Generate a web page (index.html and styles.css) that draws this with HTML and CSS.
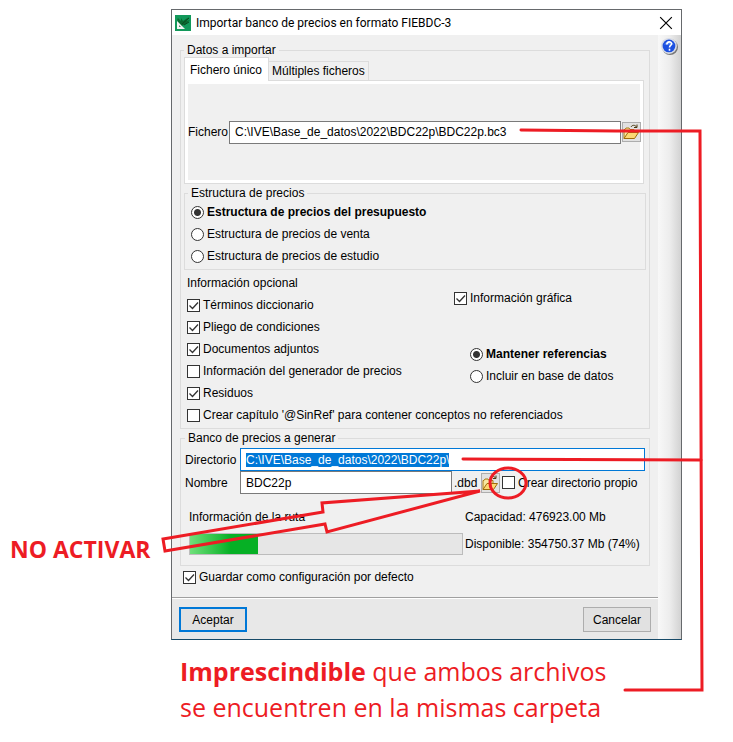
FILE: index.html
```html
<!DOCTYPE html>
<html lang="es">
<head>
    <meta charset="UTF-8">
    <meta name="viewport" content="width=device-width, initial-scale=1.0">
    <title>Importar banco de precios en formato FIEBDC-3</title>
    <link rel="stylesheet" href="styles.css">
</head>
<body>
    <svg class="icon-defs" aria-hidden="true">
        <symbol id="icon-folder" viewBox="0 0 16 16">
            <path d="M1 14.500V5.500h1l1-1.500h3l1 1.500h4v3" fill="#f8e8a0" stroke="#a87814"/>
            <path d="M1 14.500l4-6h10.500l-4 6z" fill="#fbd873" stroke="#a06c08"/>
            <path d="M8 3c1-2 4-2.500 5.500 0M14 .5v3h-3" fill="none" stroke="#4a3a10"/>
        </symbol>
    </svg>

    <div class="page">
        <strong class="side-note">NO ACTIVAR</strong>

        <div class="dialog" role="dialog" aria-labelledby="dialog-title">
            <header class="title-bar">
                <svg class="app-icon" viewBox="0 0 16 16" aria-hidden="true">
                    <rect width="16" height="16" fill="#12985a"/>
                    <path d="M5 9C2 6 2 4 3 3l3 3V3l2 3 6-4-3 4 4-1-4 4-5 2z" fill="#0b6a30"/>
                    <path d="M7 9l7-6M9 10l5-3" stroke="#0a4a20" fill="none"/>
                    <path d="M2 6v8h8z" fill="#f4f4f4"/>
                    <path d="M4 10v2h2z" fill="#4c8a68"/>
                </svg>
                <h1 id="dialog-title">Importar banco de precios en formato FIEBDC-3</h1>
                <button class="close-btn" type="button" aria-label="Cerrar">
                    <svg viewBox="0 0 12 12" aria-hidden="true"><path d="M1 1l10 10M11 1L1 11" stroke="#000" fill="none"/></svg>
                </button>
            </header>

            <div class="dialog-body">
                <form class="main-form">
                    <div class="form-content">
                        <fieldset class="group import-group">
                            <legend>Datos a importar</legend>
                            <div class="tabs" role="tablist">
                                <button class="tab active" type="button" role="tab" aria-selected="true">Fichero único</button>
                                <button class="tab" type="button" role="tab" aria-selected="false">Múltiples ficheros</button>
                            </div>
                            <div class="tab-panel" role="tabpanel">
                                <label for="fichero">Fichero</label>
                                <input class="text-box" type="text" id="fichero" value="C:\IVE\Base_de_datos\2022\BDC22p\BDC22p.bc3">
                                <button class="browse-btn" type="button" aria-label="Examinar fichero"><svg><use href="#icon-folder"/></svg></button>
                            </div>

                            <fieldset class="group price-group">
                                <legend>Estructura de precios</legend>
                                <label class="option"><input type="radio" name="estructura" checked><span>Estructura de precios del presupuesto</span></label>
                                <label class="option"><input type="radio" name="estructura"><span>Estructura de precios de venta</span></label>
                                <label class="option"><input type="radio" name="estructura"><span>Estructura de precios de estudio</span></label>
                            </fieldset>

                            <div class="optional">
                                <div class="optional-left">
                                    <h2>Información opcional</h2>
                                    <label class="option"><input type="checkbox" checked><span>Términos diccionario</span></label>
                                    <label class="option"><input type="checkbox" checked><span>Pliego de condiciones</span></label>
                                    <label class="option"><input type="checkbox" checked><span>Documentos adjuntos</span></label>
                                    <label class="option"><input type="checkbox"><span>Información del generador de precios</span></label>
                                    <label class="option"><input type="checkbox" checked><span>Residuos</span></label>
                                    <label class="option"><input type="checkbox"><span>Crear capítulo '@SinRef' para contener conceptos no referenciados</span></label>
                                </div>
                                <div class="optional-right">
                                    <label class="option"><input type="checkbox" checked><span>Información gráfica</span></label>
                                    <div class="references">
                                        <label class="option"><input type="radio" name="referencias" checked><span>Mantener referencias</span></label>
                                        <label class="option"><input type="radio" name="referencias"><span>Incluir en base de datos</span></label>
                                    </div>
                                </div>
                            </div>
                        </fieldset>

                        <fieldset class="group target-group">
                            <legend>Banco de precios a generar</legend>
                            <div class="target-row">
                                <label for="directorio">Directorio</label>
                                <input class="text-box focused" type="text" id="directorio" value="C:\IVE\Base_de_datos\2022\BDC22p\">
                            </div>
                            <div class="target-row">
                                <label for="nombre">Nombre</label>
                                <input class="text-box name-box" type="text" id="nombre" value="BDC22p">
                                <span class="extension">.dbd</span>
                                <button class="browse-btn" type="button" aria-label="Examinar directorio"><svg><use href="#icon-folder"/></svg></button>
                                <label class="option"><input type="checkbox"><span>Crear directorio propio</span></label>
                            </div>
                            <div class="disk">
                                <label for="disco">Información de la ruta</label>
                                <span>Capacidad: 476923.00 Mb</span>
                                <progress id="disco" max="100" value="25"></progress>
                                <span>Disponible: 354750.37 Mb (74%)</span>
                            </div>
                        </fieldset>

                        <label class="option save-option"><input type="checkbox" checked><span>Guardar como configuración por defecto</span></label>
                    </div>

                    <footer class="actions">
                        <button class="btn default" type="button">Aceptar</button>
                        <button class="btn" type="button">Cancelar</button>
                    </footer>
                </form>

                <aside class="help-strip">
                    <button class="help-btn" type="button" aria-label="Ayuda">
                        <svg viewBox="0 0 16 16" aria-hidden="true">
                            <circle cx="8.500" cy="8.500" r="7.500" fill="#777"/>
                            <circle cx="7.500" cy="7.500" r="7.500" fill="#d8dce6"/>
                            <circle cx="7.500" cy="7.500" r="6" fill="#1c50e0"/>
                            <path d="M3 6a5 4 0 0 1 9 0z" fill="#5c8cf4"/>
                            <path d="M5.500 6c0-3 4.500-3 4.500-.5 0 1.500-2 1.500-2 3.500M8 10v2" stroke="#fff" stroke-width="1.500" fill="none"/>
                        </svg>
                    </button>
                </aside>
            </div>
        </div>

        <p class="caption"><strong>Imprescindible</strong> que ambos archivos<br>se encuentren en la mismas carpeta</p>

        <!-- Marcas rojas sobre el diálogo -->
        <svg class="marks" viewBox="0 0 733 742" aria-hidden="true">
            <path d="M521 130L616 131L700 131L701 430L702 690H625"/>
            <path d="M463 459L701 460"/>
            <ellipse cx="508" cy="483" rx="18" ry="15"/>
            <path d="M480 491L322 503L323 512L163 539L165 551L325 524L327 532Z"/>
        </svg>
    </div>

    <script src="script.js"></script>
</body>
</html>
```
FILE: styles.css
```css
* { box-sizing: border-box; }
body { margin: 0; background-color: #fff; color: #000; font-family: "Liberation Sans", Arial, sans-serif; font-size: 12px; line-height: 14px; }
button, input { font: inherit; color: inherit; }
button { padding: 0; }
h1, h2, p { margin: 0; font-size: inherit; font-weight: normal; }
.icon-defs { display: none; }

.page { position: relative; display: grid; grid-template-columns: 171px 1fr; padding: 9px 51px 16px 0; }

/* Ventana */
.dialog { border: 1px solid #66696c; border-bottom-color: #174a68; }
.title-bar { display: flex; align-items: center; height: 25px; padding: 0 8px 0 3px; background-color: #fff; }
.title-bar h1 { flex-grow: 1; padding-left: 5px; font-family: Roboto, "Segoe UI", sans-serif; font-size: 12px; }
.app-icon { width: 16px; height: 16px; }
.close-btn { border: 0; background: none; width: 14px; height: 14px; }
.close-btn svg { display: block; width: 14px; height: 14px; }
.dialog-body { display: flex; background-color: #f0f0f0; }
.main-form { flex-grow: 1; display: flex; flex-direction: column; min-width: 0; }
.form-content { padding: 8px 8px 9px; border-bottom: 1px solid #a0a0a0; }
.help-strip { width: 23px; padding: 3px 0 0 3px; background: linear-gradient(to right, #f8f8f8, #ededed 50%, #d2d2d2); }
.help-btn { border: 0; background: none; }
.help-btn svg { display: block; width: 17px; height: 17px; }

/* Grupos */
.group { min-width: 0; margin: 0; padding: 0; border: 1px solid #dcdcdc; }
.group legend { padding: 0 3px; }
.import-group { padding: 0 3px 2px; }
.price-group { margin-top: 2px; padding: 1px 0 2px; }
.price-group legend { margin-left: 3px; }
.target-group { margin-top: 2px; padding: 3px 4px 10px; }

/* Pestañas */
.tabs { display: flex; align-items: flex-end; margin-bottom: -1px; }
.tab { height: 20px; padding: 0 3px; border: 1px solid #dcdcdc; border-left: 0; background-color: #f0f0f0; }
.tab.active { height: 24px; padding: 0 6px 0 5px; border-left: 1px solid #dcdcdc; border-bottom: 0; background-color: #fff; }
.tab-panel { display: flex; align-items: center; height: 104px; margin-right: 2px; border: 1px solid #dcdcdc; box-shadow: inset 0 0 0 3px #fff; padding: 0 2px 0 3px; }
.tab-panel .text-box { flex-grow: 1; margin: 0 1px; }

/* Controles */
.text-box { min-width: 0; height: 23px; padding: 0 5px; border: 1px solid #7a7a7a; border-radius: 0; background-color: #fff; outline: none; }
.text-box.focused { border-color: #0078d7; }
.text-box::selection { background-color: #0078d7; color: #fff; }
.browse-btn { flex: none; width: 19px; height: 20px; border: 1px solid #adadad; background-color: #e1e1e1; }
.browse-btn svg { display: block; width: 16px; height: 16px; }
.option { display: flex; align-items: center; height: 22px; gap: 3px; white-space: nowrap; }
.option input { appearance: none; flex: none; width: 13px; height: 13px; margin: 0; border: 1px solid #333; background-color: #fff; }
.option input[type="radio"] { border-radius: 50%; }
.option input[type="radio"]:checked { background-image: radial-gradient(circle, #333 3px, transparent 4px); }
.option input[type="radio"]:checked + span { font-weight: bold; }
.option input[type="checkbox"]:checked { background-image: url("data:image/svg+xml,%3Csvg xmlns='http://www.w3.org/2000/svg' viewBox='0 0 11 11'%3E%3Cpath d='M1.500 5.500l3 3 5.500-6' fill='none' stroke='%23333' stroke-width='1.300'/%3E%3C/svg%3E"); }
.price-group .option { padding-left: 6px; }

/* Información opcional */
.optional { display: grid; grid-template-columns: 267px 1fr; padding: 2px 3px 0; }
.optional-left { min-width: 0; }
.optional h2 { line-height: 22px; }
.optional-right { display: flex; flex-direction: column; gap: 34px; padding-top: 15px; }
.references { padding-left: 16px; }

/* Banco de precios */
.target-row { display: flex; align-items: center; }
.target-row > label:first-child { flex: none; width: 55px; }
.target-row .text-box { flex: 1; }
.target-row .name-box { flex: none; width: 212px; }
.extension { width: 29px; padding-left: 2px; }
.target-row .browse-btn { margin-right: 2px; }
.disk { display: grid; grid-template-columns: 274px 1fr; column-gap: 2px; row-gap: 9px; align-items: center; padding: 16px 0 0 4px; white-space: nowrap; }
.disk progress { appearance: none; width: 100%; height: 22px; border: 1px solid #bcbcbc; background-color: #e6e6e6; }
.disk progress::-webkit-progress-bar { background-color: #e6e6e6; }
.disk progress::-webkit-progress-value { background: linear-gradient(to right, #6fe07a, #06b025 60%); }
.save-option { padding-left: 3px; }

/* Botones */
.actions { display: flex; justify-content: space-between; padding: 8px 7px 7px; border-top: 1px solid #fff; background-color: #e8e8e8; }
.btn { width: 68px; height: 25px; border: 1px solid #adadad; background-color: #e1e1e1; }
.btn.default { border: 2px solid #0078d7; }

/* Notas rojas */
.side-note, .caption { color: #ed1c24; font-family: "Open Sans", "Segoe UI", sans-serif; }
.side-note { align-self: end; padding: 0 0 76px 10px; font-size: 23px; line-height: 30px; white-space: nowrap; }
.caption { grid-column: 2; padding: 13px 0 0 9px; font-size: 25px; line-height: 36px; white-space: nowrap; }
.marks { position: absolute; top: 0; left: 0; width: 733px; height: 742px; pointer-events: none; fill: none; stroke: #ed1c24; stroke-width: 3; stroke-linecap: round; }
```
FILE: script.js
```js
// El directorio aparece enfocado y con todo el texto seleccionado
const directorio = document.getElementById('directorio');
directorio.focus();
directorio.select();
```
